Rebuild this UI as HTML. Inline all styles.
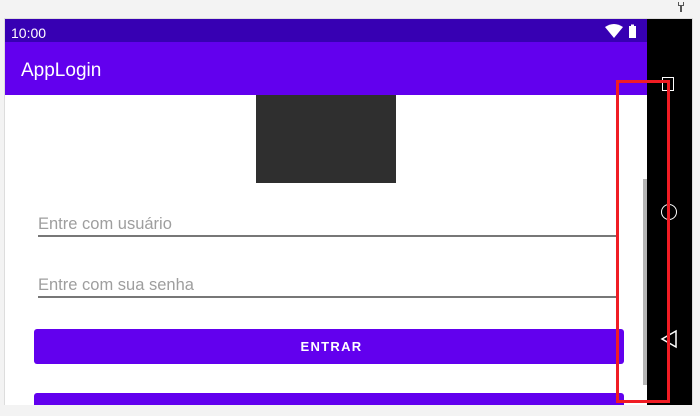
<!DOCTYPE html>
<html><head><style>
body{margin:0;width:700px;height:416px;background:#f3f3f3;position:relative;overflow:hidden;font-family:"Liberation Sans",sans-serif}
.a{position:absolute}
</style></head><body>
<svg class="a" style="left:676px;top:1px" width="10" height="12" viewBox="0 0 10 12"><path d="M2 1v4h2v6h2V5h2V1H7v3H3V1z" fill="#555"/></svg>
<div class="a" style="left:4px;top:18px;width:689px;height:387px;background:#ddd"></div>
<div class="a" style="left:5px;top:19px;width:642px;height:386px;background:#fff"></div>
<div class="a" style="left:5px;top:19px;width:642px;height:23px;background:#3700b3"></div>
<div class="a" style="left:11px;top:25px;color:#fff;font-size:14px">10:00</div>
<svg class="a" style="left:605px;top:24px" width="36" height="15" viewBox="0 0 36 15"><path d="M0 3Q9-3 18 3L9 14Z" fill="#fff"/><rect x="24" y="2" width="7" height="12" fill="#fff"/><rect x="26" y="0.5" width="3" height="2" fill="#fff"/></svg>
<div class="a" style="left:5px;top:42px;width:642px;height:53px;background:#6200ee"></div>
<div class="a" style="left:21px;top:60px;color:#fff;font-size:19px">AppLogin</div>
<div class="a" style="left:647px;top:19px;width:45px;height:386px;background:#000"></div>
<div class="a" style="left:662px;top:77px;width:12px;height:14px;border:1.5px solid #fff;box-sizing:border-box"></div>
<div class="a" style="left:661px;top:204px;width:16px;height:16px;border:1.5px solid #fff;border-radius:50%;box-sizing:border-box"></div>
<svg class="a" style="left:660px;top:329px" width="18" height="20" viewBox="0 0 18 20"><path d="M16 2V18L2 10Z" fill="none" stroke="#fff" stroke-width="1.5"/></svg>
<div class="a" style="left:256px;top:95px;width:140px;height:88px;background:#2f2f2f"></div>
<div class="a" style="left:38px;top:215px;color:#9e9e9e;font-size:16.5px">Entre com usuário</div>
<div class="a" style="left:38px;top:235px;width:580px;height:1.5px;background:#777"></div>
<div class="a" style="left:38px;top:276px;color:#9e9e9e;font-size:16.5px">Entre com sua senha</div>
<div class="a" style="left:38px;top:296px;width:580px;height:1.5px;background:#777"></div>
<div class="a" style="left:34px;top:329px;width:590px;height:35px;background:#6200ee;border-radius:3px;color:#fff;font-size:13px;letter-spacing:1.3px;font-weight:bold;text-align:center;line-height:35px;text-indent:5px">ENTRAR</div>
<div class="a" style="left:34px;top:393px;width:590px;height:12px;background:#6200ee;border-radius:3px 3px 0 0"></div>
<div class="a" style="left:643px;top:179px;width:4px;height:206px;background:#b5b5b5"></div>
<div class="a" style="left:616px;top:80px;width:54px;height:323px;border:3px solid #f01c24;box-sizing:border-box"></div>
</body></html>
